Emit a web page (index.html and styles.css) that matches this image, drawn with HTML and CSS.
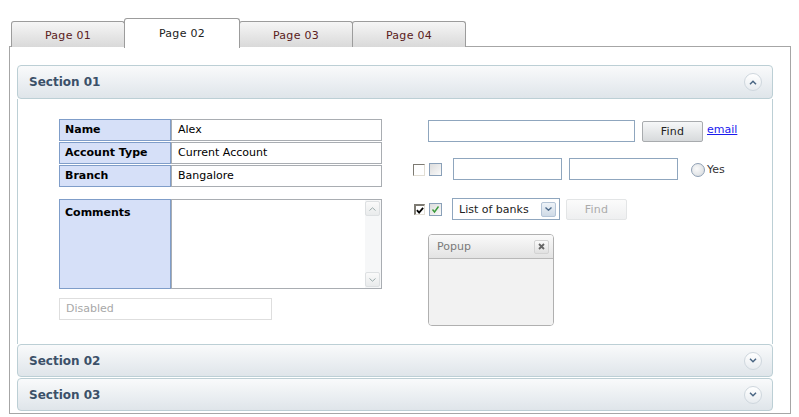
FILE: index.html
```html
<!DOCTYPE html>
<html>
<head>
<meta charset="utf-8">
<link rel="stylesheet" href="styles.css">
</head>
<body>
<div class="tabs">
  <div class="tab">Page 01</div>
  <div class="tab active">Page 02</div>
  <div class="tab">Page 03</div>
  <div class="tab">Page 04</div>
</div>
<div class="panel">
  <div class="section">
    <div class="sec-head">
      <span class="sec-title">Section 01</span>
      <span class="toggle"><svg width="8" height="5" viewBox="0 0 8 5"><path d="M1 4.2 L4 1.2 L7 4.2" fill="none" stroke="#4a6684" stroke-width="1.5"/></svg></span>
    </div>
    <div class="sec-body">
      <div class="left">
        <div class="row"><div class="lbl">Name</div><div class="val">Alex</div></div>
        <div class="row"><div class="lbl">Account Type</div><div class="val">Current Account</div></div>
        <div class="row"><div class="lbl">Branch</div><div class="val">Bangalore</div></div>
        <div class="row comments">
          <div class="lbl">Comments</div>
          <div class="val area">
            <div class="scroll">
              <span class="sbtn"><svg width="7" height="4" viewBox="0 0 7 4"><path d="M0.5 3.5 L3.5 0.8 L6.5 3.5" fill="none" stroke="#9aa" stroke-width="1"/></svg></span>
              <span class="sbtn"><svg width="7" height="4" viewBox="0 0 7 4"><path d="M0.5 0.5 L3.5 3.2 L6.5 0.5" fill="none" stroke="#9aa" stroke-width="1"/></svg></span>
            </div>
          </div>
        </div>
        <div class="disabled">Disabled</div>
      </div>
      <div class="right">
        <div class="rrow r1">
          <div class="inp wide"></div>
          <div class="btn">Find</div>
          <a class="link" href="#">email</a>
        </div>
        <div class="rrow r2">
          <span class="cb classic"></span>
          <span class="cb xp"></span>
          <div class="inp mid first"></div>
          <div class="inp mid second"></div>
          <span class="radio"></span><span class="yes">Yes</span>
        </div>
        <div class="rrow r3">
          <span class="cb classic checked"><svg width="9" height="9" viewBox="0 0 9 9"><path d="M1 4 L3.5 6.8 L8 1.5" fill="none" stroke="#000" stroke-width="2"/></svg></span>
          <span class="cb xp"><svg width="9" height="9" viewBox="0 0 9 9"><path d="M1.5 4.5 L3.5 7 L7.5 1.5" fill="none" stroke="#3a9a3a" stroke-width="1.4"/></svg></span>
          <div class="select"><span>List of banks</span><span class="sel-arrow"><svg width="7" height="4" viewBox="0 0 7 4"><path d="M0.5 0.5 L3.5 3.2 L6.5 0.5" fill="none" stroke="#4d6a8a" stroke-width="1.4"/></svg></span></div>
          <div class="btn disabled-btn">Find</div>
        </div>
        <div class="popup">
          <div class="pop-head"><span>Popup</span><span class="pop-close"><svg width="7" height="7" viewBox="0 0 7 7"><path d="M1 1 L6 6 M6 1 L1 6" stroke="#666" stroke-width="1.8"/></svg></span></div>
          <div class="pop-body"></div>
        </div>
      </div>
    </div>
  </div>
  <div class="section closed">
    <div class="sec-head">
      <span class="sec-title">Section 02</span>
      <span class="toggle"><svg width="8" height="5" viewBox="0 0 8 5"><path d="M1 0.8 L4 3.8 L7 0.8" fill="none" stroke="#4a6684" stroke-width="1.5"/></svg></span>
    </div>
  </div>
  <div class="section closed">
    <div class="sec-head">
      <span class="sec-title">Section 03</span>
      <span class="toggle"><svg width="8" height="5" viewBox="0 0 8 5"><path d="M1 0.8 L4 3.8 L7 0.8" fill="none" stroke="#4a6684" stroke-width="1.5"/></svg></span>
    </div>
  </div>
</div>
</body>
</html>
```

FILE: styles.css
```css
* { box-sizing: border-box; }
html, body { margin: 0; padding: 0; background: #fff; }
body {
  font-family: "DejaVu Sans", Verdana, sans-serif;
  font-size: 11px;
  color: #000;
  width: 799px;
  height: 417px;
  overflow: hidden;
}

/* tabs */
.tabs {
  display: flex;
  align-items: flex-end;
  padding: 17px 0 0 11px;
  height: 47px;
  position: relative;
  z-index: 2;
}
.tab {
  width: 114px;
  height: 26px;
  margin-right: -1px;
  border: 1px solid #9c9c9c;
  border-bottom: none;
  border-radius: 3px 3px 0 0;
  background: linear-gradient(#f6f6f6, #d9d9d9);
  color: #5a2020;
  font-size: 11px;
  letter-spacing: 0.3px;
  display: flex;
  align-items: center;
  justify-content: center;
  padding-top: 1px;
}
.tab.active {
  height: 30px;
  background: #fff;
  margin-bottom: -1px;
  width: 116px;
  position: relative;
  z-index: 3;
  color: #222;
  padding-top: 0;
  padding-bottom: 1px;
}

/* outer panel */
.panel {
  margin-left: 9px;
  width: 782px;
  height: 368px;
  border: 1px solid #a6a6a6;
  padding: 18px 17px 2px 7px;
  margin-top: -1px;
  position: relative;
  z-index: 1;
}

.sec-head {
  height: 34px;
  border: 1px solid #bccfd5;
  border-radius: 4px;
  background: linear-gradient(#f9fafb, #dfe5ea);
  display: flex;
  align-items: center;
  justify-content: space-between;
  padding: 0 10px 0 11px;
}
.sec-title {
  font-weight: bold;
  font-size: 12px;
  color: #3b5068;
}
.toggle {
  width: 18px;
  height: 18px;
  border-radius: 50%;
  border: 1px solid #cfd7de;
  background: linear-gradient(#ffffff, #e8ecf0);
  display: flex;
  align-items: center;
  justify-content: center;
}
.section.closed { margin-top: 1px; }
.section.closed .sec-head { height: 33px; }
.section.closed:nth-child(2) { margin-top: 0; }

.sec-body {
  height: 245px;
  border-left: 1px solid #bccfd5;
  border-right: 1px solid #bccfd5;
  display: flex;
  padding: 20px 0 0 41px;
}

/* left form */
.left {
  width: 324px;
  display: flex;
  flex-direction: column;
}
.row {
  display: flex;
  height: 22px;
  margin-bottom: 1px;
}
.lbl {
  width: 112px;
  border: 1px solid #7f9dc9;
  background: #d6e0f8;
  font-weight: bold;
  padding: 3px 0 0 5px;
  font-size: 11px;
}
.val {
  width: 211px;
  border: 1px solid #a9adb2;
  padding: 3px 0 0 6px;
}
.row.comments {
  height: 90px;
  margin-top: 11px;
}
.row.comments .lbl { padding-top: 6px; }
.val.area {
  padding: 0;
  display: flex;
  justify-content: flex-end;
}
.scroll {
  width: 16px;
  height: 100%;
  background: #f6f7f8;
  display: flex;
  flex-direction: column;
  justify-content: space-between;
  padding: 1px 1px 1px 0;
}
.sbtn {
  width: 15px;
  height: 15px;
  border: 1px solid #dde0e2;
  background: linear-gradient(#fafafa, #e9ebec);
  border-radius: 2px;
  display: flex;
  align-items: center;
  justify-content: center;
}
.disabled {
  width: 213px;
  height: 22px;
  margin-top: 8px;
  border: 1px solid #dedede;
  color: #a8a8a8;
  padding: 3px 0 0 6px;
}

/* right form */
.right {
  margin-left: 30px;
  padding-top: 1px;
  display: flex;
  flex-direction: column;
}
.rrow {
  display: flex;
  align-items: center;
  height: 22px;
}
.r1 { padding-left: 15px; }
.r2 { margin-top: 16px; }
.r3 { margin-top: 18px; }
.inp {
  height: 22px;
  border: 1px solid #8fa6be;
  background: #fff;
}
.inp.wide { width: 207px; }
.inp.mid { width: 109px; }
.inp.first { margin-left: 11px; }
.inp.second { margin-left: 7px; }
.btn {
  width: 61px;
  height: 21px;
  margin-left: 7px;
  border: 1px solid #a8abae;
  border-radius: 2px;
  background: linear-gradient(#f6f7f8, #d7dadc);
  color: #222;
  font-size: 11px;
  letter-spacing: 0.3px;
  display: flex;
  align-items: center;
  justify-content: center;
}
.link {
  margin-left: 4px;
  color: #1a1aee;
  font-size: 11px;
  text-decoration: underline;
  margin-top: -4px;
}
.cb {
  display: inline-flex;
  align-items: center;
  justify-content: center;
}
.cb.classic {
  width: 12px;
  height: 12px;
  border-top: 1px solid #7d7a72;
  border-left: 1px solid #7d7a72;
  border-bottom: 1px solid #e2ded4;
  border-right: 1px solid #e2ded4;
  background: #fff;
  margin-top: 1px;
}
.cb.classic.checked {
  width: 11px;
  height: 11px;
  margin-left: 1px;
  border-top-width: 2px;
  border-left-width: 2px;
}
.cb.xp {
  width: 13px;
  height: 13px;
  margin-left: 4px;
  border: 1px solid #8aa0b8;
  background: linear-gradient(135deg, #dcdcdc, #fafafa);
  margin-top: 1px;
}
.radio {
  width: 14px;
  height: 14px;
  margin-left: 13px;
  border-radius: 50%;
  border: 1px solid #8fa0b4;
  background: radial-gradient(circle at 40% 40%, #fafafa, #d4d8dc);
  margin-top: 1px;
}
.yes {
  margin-left: 2px;
  font-size: 11px;
  color: #333;
}
.select {
  width: 108px;
  height: 22px;
  margin-left: 10px;
  border: 1px solid #8fa6be;
  display: flex;
  align-items: center;
  justify-content: space-between;
  padding: 0 3px 0 6px;
  font-size: 11px;
  color: #222;
}
.sel-arrow {
  width: 15px;
  height: 15px;
  border: 1px solid #b4c4d6;
  border-radius: 2px;
  background: linear-gradient(#eef3f8, #cfdae6);
  display: flex;
  align-items: center;
  justify-content: center;
}
.btn.disabled-btn {
  margin-left: 6px;
  border-color: #e3e5e6;
  background: linear-gradient(#fbfbfb, #eeeff0);
  color: #ababab;
}

.popup {
  margin-top: 14px;
  margin-left: 15px;
  width: 126px;
  height: 92px;
  border: 1px solid #b0b0b0;
  border-radius: 4px;
  overflow: hidden;
  display: flex;
  flex-direction: column;
}
.pop-head {
  height: 24px;
  border-bottom: 1px solid #b8b8b8;
  background: linear-gradient(#fafafa, #e3e3e3);
  display: flex;
  align-items: center;
  justify-content: space-between;
  padding: 0 4px 0 8px;
  color: #7a7a7a;
  font-size: 11px;
}
.pop-close {
  width: 15px;
  height: 14px;
  border: 1px solid #d3d3d3;
  border-radius: 2px;
  background: linear-gradient(#fafafa, #e0e0e0);
  display: flex;
  align-items: center;
  justify-content: center;
}
.pop-body {
  flex: 1;
  background: #f2f2f2;
}
```
